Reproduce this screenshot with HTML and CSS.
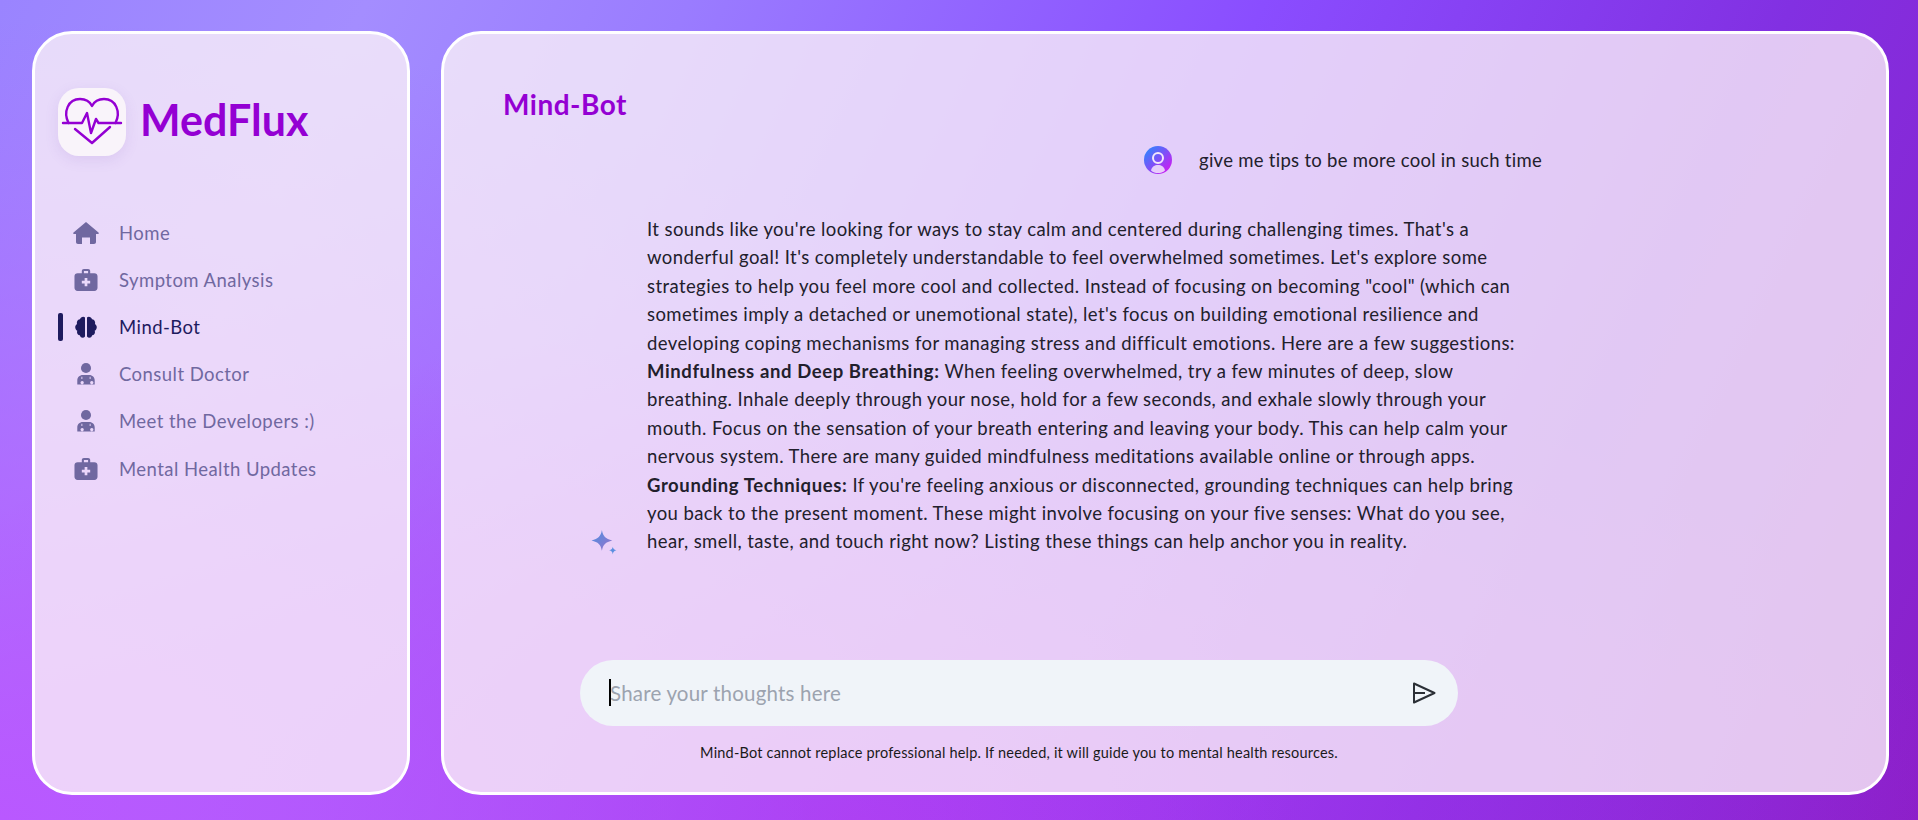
FILE: index.html
```html
<!DOCTYPE html>
<html lang="en">
<head>
	<meta charset="utf-8">
	<title>MedFlux - Mind-Bot</title>
	<link rel="stylesheet" href="styles.css">
</head>
<body>
	<aside class="sidebar">
		<div class="brand">
			<div class="logo">
				<svg viewBox="0 0 68 68" width="68" height="68" fill="none" stroke="#9400d3" stroke-width="2.4" stroke-linecap="round" stroke-linejoin="round">
					<path d="M10.500 35C5 24 10 11 22 11C28 11 32 14 34 18C36 14 40 11 46 11C58 11 63 24 57.500 35"/>
					<path d="M5 35H24L29 25L33 45L38 31L40.500 35H63"/>
					<path d="M17 41L34 55L52 39"/>
				</svg>
			</div>
			<span class="brand-name">MedFlux</span>
		</div>
		<nav class="nav">
			<a class="nav-item" href="#">
				<svg class="nav-icon" viewBox="0 0 26 22"><path d="M13 0L25.500 10.500C26.200 11.200 25.800 12 25 12H23V20C23 21.200 22.200 22 21 22H17V15.500H9V22H5C3.800 22 3 21.200 3 20V12H1C.2 12 -.2 11.200 .5 10.500Z"/></svg>
				Home
			</a>
			<a class="nav-item" href="#">
				<svg class="nav-icon" viewBox="0 0 22 21"><path fill-rule="evenodd" d="M7 4V2C7 .8 7.800 0 9 0H13C14.200 0 15 .8 15 2V4H19C20.800 4 22 5.200 22 7V18C22 19.800 20.800 21 19 21H3C1.200 21 0 19.800 0 18V7C0 5.200 1.200 4 3 4ZM9 2V4H13V2ZM9.700 8.500V11.200H7V13.800H9.700V16.500H12.300V13.800H15V11.200H12.300V8.500Z"/></svg>
				Symptom Analysis
			</a>
			<a class="nav-item active" href="#">
				<svg class="nav-icon" viewBox="0 0 22 22"><path d="M10 1.500V20.500C8.500 22.500 5.500 22 4.800 19.200C2.500 19 1.500 16.800 2.300 14.800C-.3 13.500 -.5 9.500 2 8C1.300 5.500 3 3.300 5 3.300C5.500 1 8.500 0 10 1.500ZM12 1.500C13.500 0 16.500 1 17 3.300C19 3.300 20.700 5.500 20 8C22.500 9.500 22.300 13.500 19.700 14.800C20.500 16.800 19.500 19 17.200 19.200C16.500 22 13.500 22.500 12 20.500Z"/></svg>
				Mind-Bot
			</a>
			<a class="nav-item" href="#">
				<svg class="nav-icon" viewBox="0 0 22 24"><circle cx="11" cy="5.500" r="5.500"/><path fill-rule="evenodd" d="M1.500 23.500V19C1.500 15.500 4 13 7.500 13H14.500C18 13 20.500 15.500 20.500 19V23.500ZM5 21.500A1.800 1.800 0 1 0 5 21.400ZM15.500 21.500A1.800 1.800 0 1 0 15.500 21.400ZM6 15V17.500H7V15ZM15 15V17.500H16V15Z"/></svg>
				Consult Doctor
			</a>
			<a class="nav-item" href="#">
				<svg class="nav-icon" viewBox="0 0 22 24"><circle cx="11" cy="5.500" r="5.500"/><path fill-rule="evenodd" d="M1.500 23.500V19C1.500 15.500 4 13 7.500 13H14.500C18 13 20.500 15.500 20.500 19V23.500ZM5 21.500A1.800 1.800 0 1 0 5 21.400ZM15.500 21.500A1.800 1.800 0 1 0 15.500 21.400ZM6 15V17.500H7V15ZM15 15V17.500H16V15Z"/></svg>
				Meet the Developers :)
			</a>
			<a class="nav-item" href="#">
				<svg class="nav-icon" viewBox="0 0 22 21"><path fill-rule="evenodd" d="M7 4V2C7 .8 7.800 0 9 0H13C14.200 0 15 .8 15 2V4H19C20.800 4 22 5.200 22 7V18C22 19.800 20.800 21 19 21H3C1.200 21 0 19.800 0 18V7C0 5.200 1.200 4 3 4ZM9 2V4H13V2ZM9.700 8.500V11.200H7V13.800H9.700V16.500H12.300V13.800H15V11.200H12.300V8.500Z"/></svg>
				Mental Health Updates
			</a>
		</nav>
	</aside>

	<main class="main">
		<h1 class="title">Mind-Bot</h1>
		<div class="chat">
			<div class="msg-user">
				<svg class="avatar" viewBox="0 0 28 28">
					<defs><linearGradient id="av" x1="0" y1="0" x2="1" y2="1"><stop offset="0" stop-color="#1e90ff"/><stop offset="1" stop-color="#e010f0"/></linearGradient></defs>
					<circle cx="14" cy="14" r="14" fill="url(#av)"/>
					<circle cx="14" cy="12" r="5" fill="none" stroke="#f3e8fb" stroke-width="2"/>
					<path d="M7 24.500C8 20.500 10.500 19 14 19C17.500 19 20 20.500 21 24.500C19 26.500 16.500 27 14 27C11.500 27 9 26.500 7 24.500Z" fill="#f3e8fb" opacity=".85"/>
				</svg>
				<span>give me tips to be more cool in such time</span>
			</div>
			<div class="msg-bot">
				<svg class="sparkle" viewBox="0 0 26 26">
					<defs><linearGradient id="sp" x1="0" y1="0" x2="1" y2="1"><stop offset="0" stop-color="#4a90e2"/><stop offset="1" stop-color="#9b72cb"/></linearGradient></defs>
					<path d="M10.500 1C11.500 7 14 9.500 20.500 11C14 12.500 11.500 15 10.500 21C9.500 15 7 12.500 .5 11C7 9.500 9.500 7 10.500 1Z" fill="url(#sp)"/>
					<path d="M21 17C21.300 19 22 19.800 24.500 20.500C22 21.200 21.300 22 21 24.500C20.700 22 20 21.200 17.500 20.500C20 19.800 20.700 19 21 17Z" fill="#5b8fe0"/>
				</svg>
				<p class="answer">It sounds like you're looking for ways to stay calm and centered during challenging times. That's a<br>
				wonderful goal! It's completely understandable to feel overwhelmed sometimes. Let's explore some<br>
				strategies to help you feel more cool and collected. Instead of focusing on becoming "cool" (which can<br>
				sometimes imply a detached or unemotional state), let's focus on building emotional resilience and<br>
				developing coping mechanisms for managing stress and difficult emotions. Here are a few suggestions:<br>
				<b>Mindfulness and Deep Breathing:</b> When feeling overwhelmed, try a few minutes of deep, slow<br>
				breathing. Inhale deeply through your nose, hold for a few seconds, and exhale slowly through your<br>
				mouth. Focus on the sensation of your breath entering and leaving your body. This can help calm your<br>
				nervous system. There are many guided mindfulness meditations available online or through apps.<br>
				<b>Grounding Techniques:</b> If you're feeling anxious or disconnected, grounding techniques can help bring<br>
				you back to the present moment. These might involve focusing on your five senses: What do you see,<br>
				hear, smell, taste, and touch right now? Listing these things can help anchor you in reality.</p>
			</div>
		</div>
		<div class="composer">
			<div class="input-pill">
				<span class="caret"></span>
				<span class="placeholder">Share your thoughts here</span>
				<svg class="send" viewBox="0 0 24 24" fill="none" stroke="#2b2f36" stroke-width="2" stroke-linejoin="round"><path d="M2 2.500L22.500 12L2 21.500ZM2 12H13"/></svg>
			</div>
			<p class="disclaimer">Mind-Bot cannot replace professional help. If needed, it will guide you to mental health resources.</p>
		</div>
	</main>
</body>
</html>
```

FILE: styles.css
```css
html, body {
	margin: 0;
	height: 100%;
}

body {
	box-sizing: border-box;
	display: flex;
	gap: 31px;
	height: 820px;
	padding: 31px 29px 25px 32px;
	overflow: hidden;
	font-family: "Lato", "Noto Sans", sans-serif;
	background:
		radial-gradient(ellipse 1300px 800px at 0% 100%, #b958ff 0%, rgba(185, 88, 255, 0) 100%),
		radial-gradient(ellipse 1100px 500px at 45% 100%, rgba(170, 50, 235, .9) 0%, rgba(170, 50, 235, 0) 100%),
		linear-gradient(115deg, #9a84ff 0%, #a48dff 16%, #9a7cff 30%, #8a4dff 55%, #8230e2 78%, #8c1fc8 100%);
}

.sidebar, .main {
	box-sizing: border-box;
	border: 3px solid #fff;
	border-radius: 40px;
	background: rgba(252, 243, 249, .78);
}

.sidebar {
	flex: none;
	width: 378px;
	padding: 54px 0 0 23px;
}

.brand {
	display: flex;
	align-items: center;
	gap: 14px;
}

.logo {
	width: 68px;
	height: 68px;
	border-radius: 21px;
	background: #f9f4fa;
	box-shadow: 0 4px 14px rgba(120, 80, 180, .12);
}

.brand-name {
	margin-bottom: 6px;
	font-size: 43px;
	font-weight: 700;
	color: #9400d3;
}

.nav {
	display: flex;
	flex-direction: column;
	margin-top: 53px;
}

.nav-item {
	position: relative;
	display: flex;
	align-items: center;
	height: 47.200px;
	padding-left: 15px;
	font-size: 18.500px;
	color: #7068a0;
	text-decoration: none;
	letter-spacing: .45px;
}

.nav-item.active {
	color: #1e1b5e;
}

.nav-item.active::before {
	content: "";
	position: absolute;
	left: 0;
	top: 10px;
	width: 5px;
	height: 28px;
	border-radius: 2px;
	background: #1e1b5e;
}

.nav-icon {
	flex: none;
	width: 26px;
	height: 22px;
	margin-right: 20px;
	fill: currentColor;
}

.main {
	flex: 1;
	display: flex;
	flex-direction: column;
	padding: 0 0 0 59px;
}

.title {
	margin: 52px 0 0;
	font-size: 28px;
	line-height: 36px;
	font-weight: 700;
	letter-spacing: .5px;
	color: #9400d3;
}

.chat {
	padding-left: 76px;
	color: #22202c;
	font-size: 18.500px;
}

.msg-user {
	display: flex;
	align-items: center;
	justify-content: flex-end;
	gap: 27px;
	width: 963px;
	margin-top: 24px;
	letter-spacing: .28px;
}

.avatar {
	width: 28px;
	height: 28px;
}

.msg-bot {
	display: flex;
	align-items: flex-end;
	gap: 29px;
	margin-top: 41px;
}

.sparkle {
	flex: none;
	width: 27px;
	height: 27px;
	margin: 0 0 0 12px;
}

.answer {
	margin: 0;
	line-height: 28.400px;
	white-space: nowrap;
	letter-spacing: .41px;
}

.answer b {
	letter-spacing: .6px;
}

.composer {
	margin-top: auto;
	margin-left: 77px;
	width: 878px;
}

.input-pill {
	position: relative;
	display: flex;
	align-items: center;
	height: 66px;
	padding: 0 22px 0 30px;
	border-radius: 33px;
	background: #f0f4f9;
}

.caret {
	position: absolute;
	left: 29px;
	top: 19px;
	width: 2px;
	height: 27px;
	background: #000;
}

.placeholder {
	flex: 1;
	font-size: 20.500px;
	letter-spacing: .2px;
	color: #9ca3af;
}

.send {
	width: 24px;
	height: 24px;
}

.disclaimer {
	margin: 18px 0 30px;
	font-size: 14.500px;
	line-height: 18px;
	letter-spacing: .2px;
	text-align: center;
	color: #1a1a1a;
}
```
